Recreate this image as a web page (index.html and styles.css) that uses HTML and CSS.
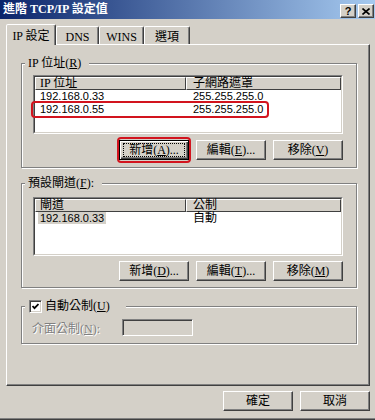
FILE: index.html
```html
<!DOCTYPE html>
<html>
    <head>
        <meta charset="utf-8">
        <title>進階 TCP/IP 設定值</title>
        <link rel="stylesheet" href="styles.css">
    </head>
    <body>
        <div class="window">
            <div class="titlebar">
                <span class="title">進階 TCP/IP 設定值</span>
                <span class="caption-buttons">
                    <span class="cap-btn cap-help">?</span>
                    <span class="cap-btn cap-close">
                        <svg width="8" height="7" viewBox="0 0 8 7"><path d="M0.5 0.5 L7.5 6.5 M7.5 0.5 L0.5 6.5" stroke="#000" stroke-width="1.6" fill="none"/></svg>
                    </span>
                </span>
            </div>

            <div class="tabs">
                <span class="tab tab-ip active">IP 設定</span>
                <span class="tab tab-dns">DNS</span>
                <span class="tab tab-wins">WINS</span>
                <span class="tab tab-opt">選項</span>
            </div>

            <div class="sheet">
                <fieldset class="group group-ip">
                    <legend>IP 位址(<u>R</u>)</legend>
                    <div class="listview">
                        <div class="lv-inner">
                            <div class="lv-head">
                                <span class="col1">IP 位址</span>
                                <span class="col2">子網路遮罩</span>
                            </div>
                            <div class="lv-row">
                                <span class="col1 num">192.168.0.33</span>
                                <span class="col2 num">255.255.255.0</span>
                            </div>
                            <div class="lv-row">
                                <span class="col1 num">192.168.0.55</span>
                                <span class="col2 num">255.255.255.0</span>
                                <span class="mark-row"></span>
                            </div>
                        </div>
                    </div>
                    <div class="btn-row">
                        <span class="mark-btn">
                            <button class="btn btn-default"><span class="focus">新增(<u>A</u>)...</span></button>
                        </span>
                        <button class="btn">編輯(<u>E</u>)...</button>
                        <button class="btn">移除(<u>V</u>)</button>
                    </div>
                </fieldset>

                <fieldset class="group group-gw">
                    <legend>預設閘道(<u>F</u>):</legend>
                    <div class="listview">
                        <div class="lv-inner">
                            <div class="lv-head">
                                <span class="col1">閘道</span>
                                <span class="col2">公制</span>
                            </div>
                            <div class="lv-row">
                                <span class="col1 sel-col"><span class="num inactive-sel">192.168.0.33</span></span>
                                <span class="col2">自動</span>
                            </div>
                        </div>
                    </div>
                    <div class="btn-row">
                        <button class="btn">新增(<u>D</u>)...</button>
                        <button class="btn">編輯(<u>T</u>)...</button>
                        <button class="btn">移除(<u>M</u>)</button>
                    </div>
                </fieldset>

                <fieldset class="group group-metric">
                    <legend>
                        <span class="check">
                            <svg width="7" height="7" viewBox="0 0 7 7"><path d="M0.5 3 L2.5 5.2 L6.5 1" stroke="#000" stroke-width="1.8" fill="none"/></svg>
                        </span>
                        <span>自動公制(<u>U</u>)</span>
                    </legend>
                    <div class="metric-row">
                        <span class="disabled-label">介面公制(<u>N</u>):</span>
                        <span class="textbox"></span>
                    </div>
                </fieldset>
            </div>

            <div class="dialog-buttons">
                <button class="btn">確定</button>
                <button class="btn">取消</button>
            </div>
        </div>
    </body>
</html>
```

FILE: styles.css
```css
body {
    margin: 0;
    background: #d4d0c8;
    font-family: "Liberation Serif", "Noto Sans CJK TC", serif;
    font-size: 12px;
    color: #000;
}
u {
    text-decoration: underline;
}
.window {
    width: 375px;
    height: 420px;
    box-sizing: border-box;
    overflow: hidden;
    border-bottom: 1px solid #404040;
    box-shadow: inset 0 -1px 0 #808080;
}

/* title bar */
.titlebar {
    height: 19px;
    display: flex;
    justify-content: space-between;
    background: linear-gradient(to right, #0a246a, #a6caf0);
}
.title {
    color: #fff;
    font-weight: bold;
    line-height: 19px;
    padding-left: 3px;
}
.caption-buttons {
    display: flex;
    gap: 2px;
    align-self: flex-end;
    margin-bottom: 1px;
    padding-right: 1px;
}
.cap-btn {
    width: 16px;
    height: 14px;
    box-sizing: border-box;
    background: #d4d0c8;
    border: 1px solid;
    border-color: #fff #404040 #404040 #fff;
    box-shadow: inset -1px -1px 0 #808080;
    display: flex;
    align-items: center;
    justify-content: center;
}
.cap-help {
    font-family: "Liberation Sans", sans-serif;
    font-weight: bold;
    font-size: 11px;
    line-height: 12px;
}

/* tabs */
.tabs {
    display: flex;
    align-items: flex-end;
    height: 20px;
    margin-top: 5px;
    padding-left: 6px;
    position: relative;
    z-index: 1;
}
.tab {
    height: 18px;
    box-sizing: border-box;
    border: 1px solid;
    border-bottom: none;
    border-color: #fff #404040 transparent #fff;
    border-radius: 2px 2px 0 0;
    box-shadow: inset -1px 0 0 #808080;
    padding-top: 2px;
    line-height: 16px;
    text-align: center;
}
.tab.active {
    height: 21px;
    margin-bottom: -1px;
    padding-top: 3px;
    background: #d4d0c8;
}
.tab-ip { width: 50px; }
.tab-dns { width: 43px; }
.tab-wins { width: 45px; }
.tab-opt { width: 46px; }

/* property sheet */
.sheet {
    margin-left: 6px;
    width: 364px;
    height: 342px;
    box-sizing: border-box;
    border: 1px solid;
    border-color: #fff #404040 #404040 #fff;
    box-shadow: inset -1px -1px 0 #808080;
    overflow: hidden;
}

/* group boxes */
.group {
    margin: 0 0 0 14px;
    width: 336px;
    box-sizing: border-box;
    border: 1px solid #808080;
    box-shadow: 1px 1px 0 #fff, inset 1px 1px 0 #fff;
    padding: 5px 13px 7px 11px;
    min-width: 0;
}
.group legend {
    margin-left: -8px;
    padding: 0 8px 0 3px;
    line-height: 14px;
    height: 14px;
    background: #d4d0c8;
}
.group-ip {
    margin-top: 11px;
}
.group-gw {
    margin-top: 8px;
    padding-top: 7px;
    padding-bottom: 6px;
}
.group-metric {
    margin-top: 11px;
    padding-top: 6px;
    padding-bottom: 7px;
}
.group-metric legend {
    display: flex;
    align-items: flex-start;
    gap: 3px;
    padding: 0 16px 0 4px;
}

/* list view */
.listview {
    height: 59px;
    box-sizing: border-box;
    border: 1px solid;
    border-color: #808080 #fff #fff #808080;
}
.lv-inner {
    height: 100%;
    box-sizing: border-box;
    border: 1px solid;
    border-color: #404040 #d4d0c8 #d4d0c8 #404040;
    background: #fff;
}
.lv-head {
    display: flex;
    height: 13px;
}
.lv-head span {
    box-sizing: border-box;
    height: 13px;
    line-height: 11px;
    border: 1px solid;
    border-color: #fff #404040 #404040 #fff;
    background: #d4d0c8;
    padding-left: 4px;
}
.lv-head .col2 {
    padding-left: 6px;
}
.col1 {
    width: 151px;
    flex: none;
}
.col2 {
    flex: 1;
}
.lv-row {
    display: flex;
    height: 13px;
    line-height: 13px;
    position: relative;
}
.lv-row .col1 {
    padding-left: 5px;
    box-sizing: border-box;
}
.lv-row .col2 {
    padding-left: 7px;
}
.lv-row .sel-col {
    padding-left: 3px;
}
.num {
    font-family: "Liberation Sans", sans-serif;
    font-size: 11px;
}
.inactive-sel {
    background: #d4d0c8;
    padding: 0 2px;
}
.mark-row {
    position: absolute;
    left: -4px;
    top: -2px;
    width: 238px;
    height: 17px;
    box-sizing: border-box;
    border: 2px solid #d2141e;
    border-radius: 4px;
}

/* buttons */
.btn-row {
    display: flex;
    justify-content: flex-end;
    gap: 7px;
    margin-top: 6px;
}
.group-gw .btn-row {
    margin-top: 5px;
}
.btn {
    width: 70px;
    height: 20px;
    box-sizing: border-box;
    padding: 0;
    font: inherit;
    color: #000;
    background: #d4d0c8;
    border: 1px solid;
    border-color: #fff #404040 #404040 #fff;
    box-shadow: inset -1px -1px 0 #808080;
    line-height: 16px;
}
.btn-default {
    border-color: #000;
    box-shadow: inset 1px 1px 0 #fff, inset -1px -1px 0 #404040, inset -2px -2px 0 #808080;
}
.focus {
    display: block;
    margin: 0 3px;
    border: 1px dotted #000;
    line-height: 12px;
}
.mark-btn {
    display: inline-flex;
    margin: -3px -2px;
    padding: 1px 0;
    border: 2px solid #d2141e;
    border-radius: 4px;
}

/* metric row */
.check {
    width: 13px;
    height: 13px;
    margin-top: 1px;
    box-sizing: border-box;
    border: 1px solid;
    border-color: #808080 #fff #fff #808080;
    box-shadow: inset 1px 1px 0 #404040, inset -1px -1px 0 #d4d0c8;
    background: #fff;
    display: flex;
    align-items: center;
    justify-content: center;
}
.metric-row {
    display: flex;
    align-items: center;
    height: 17px;
}
.disabled-label {
    width: 90px;
    margin-left: -1px;
    color: #808080;
    text-shadow: 1px 1px 0 #fff;
}
.textbox {
    width: 71px;
    height: 17px;
    box-sizing: border-box;
    border: 1px solid;
    border-color: #808080 #fff #fff #808080;
    box-shadow: inset 1px 1px 0 #404040, inset -1px -1px 0 #d4d0c8;
    background: #d4d0c8;
}

/* OK / Cancel */
.dialog-buttons {
    display: flex;
    justify-content: flex-end;
    gap: 7px;
    margin-top: 5px;
    padding-right: 5px;
}
```
